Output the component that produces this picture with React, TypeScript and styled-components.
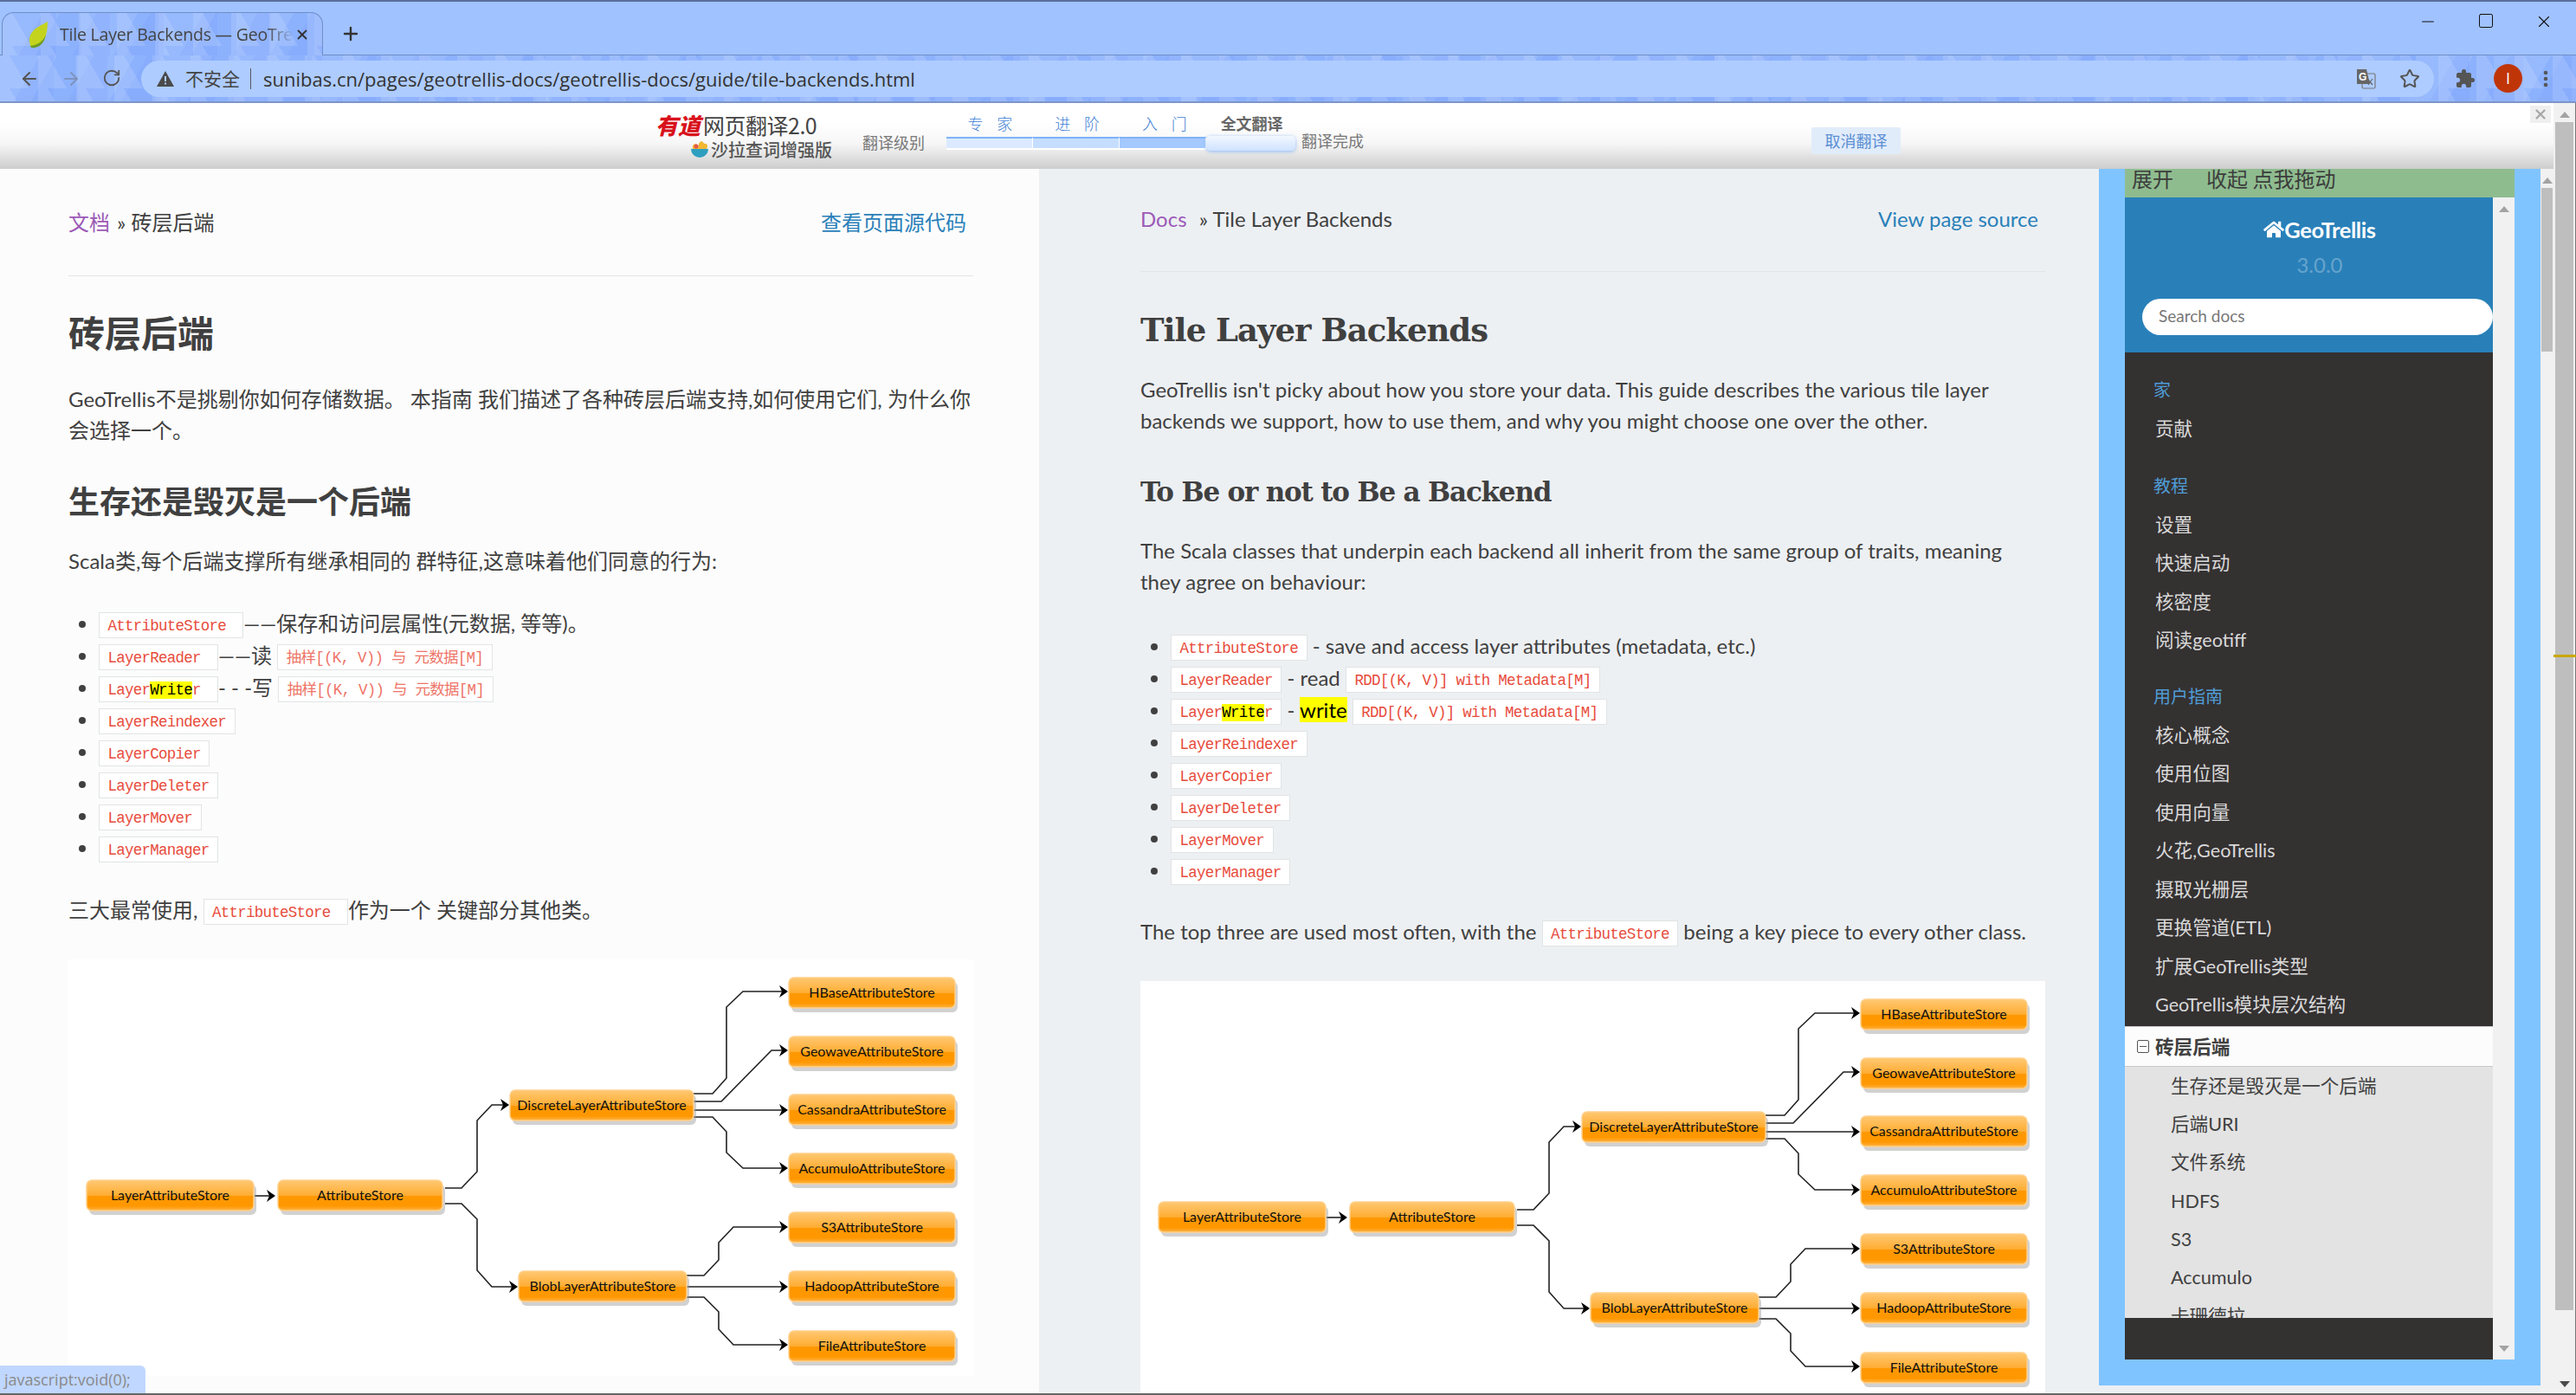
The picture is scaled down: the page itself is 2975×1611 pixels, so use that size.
import React from "react";
import styled, { createGlobalStyle } from "styled-components";
import { ArrowLeft, ArrowRight, RotateCw, Star, Plus, X, Minus, Square, MoreVertical } from "lucide-react";
import { MdExtension } from "react-icons/md";
import { FaHome } from "react-icons/fa";

const sans = `Lato, "Noto Sans CJK SC", sans-serif`;
const ui = `"Open Sans", "Noto Sans CJK SC", sans-serif`;

const GlobalStyle = createGlobalStyle`
  html, body { margin: 0; padding: 0; background: #fff; }
  * { box-sizing: border-box; }
  body { font-family: ${sans}; color: #404040; }
`;

const Window = styled.div`
  position: relative;
  width: 2975px;
  height: 1611px;
  display: flex;
  flex-direction: column;
  overflow: hidden;
  border-bottom: 2px solid #666;
`;

/* ---------- browser chrome ---------- */

const triangles = `
  background-color: #8db2fd;
  background-image:
    linear-gradient(60deg, rgba(255,255,255,.13) 50%, transparent 50%),
    linear-gradient(-60deg, rgba(110,140,255,.14) 50%, transparent 50%),
    linear-gradient(120deg, rgba(255,255,255,.09) 50%, transparent 50%);
  background-size: 44px 38px, 62px 54px, 90px 74px;
`;

const TabStrip = styled.div`
  height: 64px;
  flex: none;
  display: flex;
  align-items: flex-end;
  background: #a0c2ff;
  border-top: 2px solid #5a6f9c;
  border-bottom: 1px solid #6f8fc8;
  padding-left: 2px;
`;

const Tab = styled.div`
  width: 371px;
  height: 50px;
  margin-bottom: -1px;
  display: flex;
  align-items: center;
  padding: 0 14px 0 30px;
  border: 1px solid #6f8fc8;
  border-bottom: none;
  border-radius: 14px 14px 0 0;
  ${triangles}
`;

const TabTitle = styled.span`
  flex: 1;
  margin-left: 12px;
  font: 19.5px ${ui};
  letter-spacing: -0.2px;
  color: #444;
  white-space: nowrap;
  overflow: hidden;
  mask-image: linear-gradient(90deg, #000 88%, transparent);
`;

const NewTab = styled.div`
  margin: 0 0 12px 20px;
  color: #333;
  display: flex;
`;

const WindowControls = styled.div`
  margin-left: auto;
  align-self: flex-start;
  display: flex;
  gap: 46px;
  padding: 12px 26px 0 0;
  color: #111;
`;

const Toolbar = styled.div`
  height: 55px;
  flex: none;
  display: flex;
  align-items: center;
  border-bottom: 2px solid #7c96c8;
  ${triangles}
`;

const NavButtons = styled.div`
  width: 163px;
  flex: none;
  display: flex;
  gap: 24px;
  padding-left: 22px;
  color: #555;
`;

const Omnibox = styled.div`
  width: 2648px;
  height: 42px;
  flex: none;
  display: flex;
  align-items: center;
  border-radius: 21px;
  background: #aeccff;
  padding: 0 16px 0 18px;
`;

const Insecure = styled.span`
  margin-left: 13px;
  padding-right: 12px;
  border-right: 1px solid #556;
  font: 21px/24px ${ui};
  color: #444;
`;

const Url = styled.span`
  margin-left: 14px;
  font: 22px ${ui};
  color: #333;
`;

const OmniIcons = styled.div`
  margin-left: auto;
  display: flex;
  align-items: center;
  gap: 27px;
  color: #555;
`;

const ProfileArea = styled.div`
  flex: 1;
  display: flex;
  align-items: center;
  padding-left: 24px;
  color: #555;
`;

const Avatar = styled.div`
  width: 33px;
  height: 33px;
  margin-left: 21px;
  border-radius: 50%;
  background: #c03508;
  color: #fff;
  font: 18px/33px ${ui};
  text-align: center;
`;

const ToolbarDots = styled.div`
  margin-left: 15px;
  display: flex;
`;

/* ---------- translate bar ---------- */

const Body = styled.div`
  flex: 1;
  min-height: 0;
  display: flex;
`;

const Viewport = styled.div`
  flex: 1;
  min-width: 0;
  display: flex;
  flex-direction: column;
`;

const PageScrollbar = styled.div`
  width: 26px;
  flex: none;
  background: #f1f1f1;
  border-right: 1px solid #777;
  display: flex;
  flex-direction: column;
  align-items: center;
  padding: 10px 2px 7px 2px;
`;

const Arrow = styled.div<{ $down?: boolean; $color?: string; $push?: boolean }>`
  width: 0;
  height: 0;
  flex: none;
  margin-top: ${(p) => (p.$push ? "auto" : 0)};
  border-left: 6px solid transparent;
  border-right: 6px solid transparent;
  border-${(p) => (p.$down ? "top" : "bottom")}: 7px solid ${(p) => p.$color || "#a3a3a3"};
`;

const Thumb = styled.div<{ $height: number; $top: number; $width?: number }>`
  width: ${(p) => p.$width || 21}px;
  height: ${(p) => p.$height}px;
  margin-top: ${(p) => p.$top}px;
  flex: none;
  background: #bebebe;
`;

const ScrollMark = styled.div`
  position: absolute;
  right: 0;
  top: 756px;
  width: 26px;
  height: 3px;
  background: #c9a800;
`;

const TranslateBar = styled.div`
  height: 76px;
  flex: none;
  position: relative;
  z-index: 2;
  display: flex;
  padding-left: 757px;
  background: linear-gradient(#fff 0%, #fff 30%, #f6f6f6 62%, #cdcdcd 100%);
  font-family: "Noto Sans CJK SC", sans-serif;
`;

const Brand = styled.div`
  width: 239px;
  flex: none;
  padding-top: 9px;
`;

const BrandTop = styled.div`
  display: flex;
  align-items: center;
  height: 32px;
`;

const BrandMark = styled.span`
  font: italic 900 26px/32px "Noto Sans CJK SC", sans-serif;
  color: #d8121c;
  width: 55px;
`;

const BrandName = styled.span`
  font-size: 25px;
  color: #444;
  letter-spacing: -0.5px;
`;

const BrandSub = styled.div`
  display: flex;
  align-items: center;
  gap: 2px;
  margin-left: 40px;
  margin-top: 1px;
  font-size: 20px;
  line-height: 22px;
  font-weight: 500;
  color: #555;
`;

const BarNote = styled.span<{ $top: number }>`
  margin-top: ${(p) => p.$top}px;
  flex: none;
  font-size: 18px;
  line-height: 22px;
  color: #777;
`;

const Levels = styled.div`
  width: 403px;
  flex: none;
  margin: 0 7px 0 25px;
`;

const LevelLabels = styled.div`
  display: grid;
  grid-template-columns: repeat(4, 1fr);
  padding-top: 13px;
  height: 39px;
`;

const LevelLabel = styled.span<{ $active?: boolean }>`
  text-align: center;
  font-size: 18px;
  line-height: 20px;
  letter-spacing: ${(p) => (p.$active ? 0 : "16px")};
  margin-right: ${(p) => (p.$active ? 0 : "-16px")};
  font-weight: ${(p) => (p.$active ? 700 : 300)};
  color: ${(p) => (p.$active ? "#666" : "#3f7fd6")};
`;

const Track = styled.div`
  display: flex;
  height: 15px;
  align-items: stretch;
`;

const Segment = styled.div<{ $fill: string }>`
  width: 100px;
  border-right: 1px solid #fff;
  border-bottom: 2px solid #fff;
  border-top: 2px solid #7fb2f8;
  background: ${(p) => p.$fill};
`;

const Knob = styled.div`
  width: 103px;
  margin-top: -1px;
  height: 17px;
  border-radius: 5px;
  background: linear-gradient(#f3f8ff, #cfe2ff);
  box-shadow: 0 1px 4px #8db9f7;
`;

const CancelButton = styled.div`
  margin: 28px 0 0 517px;
  width: 103px;
  height: 31px;
  border-radius: 3px;
  background: #e1ecfa;
  color: #5b8fd3;
  font-size: 18px;
  line-height: 31px;
  text-align: center;
`;

const BarClose = styled.div`
  position: absolute;
  top: 3px;
  right: 3px;
  width: 24px;
  height: 20px;
  background: #efefef;
  color: #a8a8a8;
  display: flex;
  align-items: center;
  justify-content: center;
`;

/* ---------- documents ---------- */

const Main = styled.div`
  position: relative;
  flex: 1;
  min-height: 0;
  display: flex;
`;

const Pane = styled.div<{ $width?: number; $left: number; $bg: string; $top: number }>`
  ${(p) => (p.$width ? `width: ${p.$width}px; flex: none;` : "flex: 1;")}
  min-width: 0;
  overflow: hidden;
  padding: ${(p) => p.$top}px 0 0 ${(p) => p.$left}px;
  background: ${(p) => p.$bg};
`;

const InnerScrollbar = styled.div`
  width: 15px;
  flex: none;
  background: #f1f1f1;
  display: flex;
  flex-direction: column;
  align-items: center;
  padding-top: 10px;
`;

const Column = styled.div`
  width: 1045px;
`;

const Crumbs = styled.div`
  display: flex;
  justify-content: space-between;
  height: 36px;
  padding-right: 8px;
  font-size: 24px;
  line-height: 36px;
`;

const DocsLink = styled.a`
  color: #9b59b6;
  margin-right: 8px;
`;

const SourceLink = styled.a`
  color: #2980b9;
`;

const Divider = styled.div<{ $top: number }>`
  height: 1px;
  margin-top: ${(p) => p.$top}px;
  background: #e1e4e5;
`;

const Title = styled.h1<{ $top: number; $cjk?: boolean }>`
  margin: ${(p) => p.$top}px 0 0;
  height: 60px;
  font: 700 ${(p) => (p.$cjk ? "42px/60px" : "37px/60px")}
    ${(p) => (p.$cjk ? `"Noto Sans CJK SC"` : `"DejaVu Serif"`)}, sans-serif;
  letter-spacing: ${(p) => (p.$cjk ? 0 : "-1px")};
  color: #404040;
`;

const Subtitle = styled.h2<{ $top: number; $cjk?: boolean }>`
  margin: ${(p) => p.$top}px 0 0;
  height: 50px;
  font: 700 ${(p) => (p.$cjk ? "36px/50px" : "31px/50px")}
    ${(p) => (p.$cjk ? `"Noto Sans CJK SC"` : `"DejaVu Serif"`)}, sans-serif;
  letter-spacing: ${(p) => (p.$cjk ? 0 : "-1.2px")};
  color: #404040;
`;

const Para = styled.p<{ $top: number }>`
  margin: ${(p) => p.$top}px 0 0;
  font-size: 24px;
  line-height: 36px;
  white-space: pre-wrap;
`;

const Bullets = styled.ul<{ $top: number }>`
  margin: ${(p) => p.$top}px 0 0;
  padding: 0 0 0 35px;
  list-style: disc;
`;

const Bullet = styled.li`
  height: 37px;
  font-size: 24px;
  line-height: 37px;
  white-space: pre-wrap;
`;

const Code = styled.code<{ $faint?: boolean }>`
  display: inline-block;
  height: 30px;
  padding: 0 9.5px;
  border: 1px solid #e1e4e5;
  background: #fff;
  color: ${(p) => (p.$faint ? "#ee7468" : "#e74c3c")};
  font: 17.5px/30px "Liberation Mono", "Noto Sans CJK SC", monospace;
  letter-spacing: -0.75px;
  white-space: pre;
  vertical-align: 1px;
`;

const Mark = styled.mark`
  background: #ff0;
  color: #000;
`;

const DiagramFrame = styled.div<{ $top: number }>`
  margin-top: ${(p) => p.$top}px;
  width: 1045px;
  height: 481px;
  background: #fff;
`;

const nodes = [
  { label: "LayerAttributeStore", x: 21, y: 255, w: 193 },
  { label: "AttributeStore", x: 242, y: 255, w: 190 },
  { label: "DiscreteLayerAttributeStore", x: 510, y: 151, w: 212 },
  { label: "BlobLayerAttributeStore", x: 520, y: 360, w: 194 },
  { label: "HBaseAttributeStore", x: 832, y: 21, w: 192 },
  { label: "GeowaveAttributeStore", x: 832, y: 89, w: 192 },
  { label: "CassandraAttributeStore", x: 832, y: 156, w: 192 },
  { label: "AccumuloAttributeStore", x: 832, y: 224, w: 192 },
  { label: "S3AttributeStore", x: 832, y: 292, w: 192 },
  { label: "HadoopAttributeStore", x: 832, y: 360, w: 192 },
  { label: "FileAttributeStore", x: 832, y: 429, w: 192 },
];

const edges = [
  "M215 273 H238",
  "M435 264 H454 L472 245 V186 L489 168 H508",
  "M435 282 H454 L472 300 V359 L489 378 H518",
  "M722 155 H744 L760 137 V55 L779 37 H830",
  "M722 164 H754 L812 105 H830",
  "M722 174 H830",
  "M722 182 H744 L760 199 V223 L779 241 H830",
  "M714 365 H734 L751 347 V327 L768 309 H830",
  "M714 378 H830",
  "M714 390 H734 L751 407 V427 L768 445 H830",
];

const Diagram = ({ id }: { id: string }) => (
  <svg width="1045" height="481" viewBox="0 0 1045 481">
    <defs>
      <linearGradient id={id} x1="0" y1="0" x2="0" y2="1">
        <stop offset="0" stopColor="#ffc873" />
        <stop offset="0.5" stopColor="#ffad33" />
        <stop offset="0.52" stopColor="#ff9800" />
        <stop offset="0.85" stopColor="#ff9800" />
        <stop offset="1" stopColor="#ffb347" />
      </linearGradient>
      <marker id={`${id}-a`} markerUnits="userSpaceOnUse" markerWidth="12" markerHeight="14" refX="10" refY="7" orient="auto">
        <path d="M1 0 L11 7 L1 14 L4 7 Z" fill="#000" />
      </marker>
    </defs>
    {edges.map((d) => (
      <path key={d} d={d} fill="none" stroke="#222" strokeWidth="1.6" markerEnd={`url(#${id}-a)`} />
    ))}
    {nodes.map((n) => (
      <g key={n.label}>
        <rect x={n.x + 3} y={n.y + 5} width={n.w} height={35} rx="6" fill="#999" opacity="0.45" />
        <rect x={n.x} y={n.y} width={n.w} height={35} rx="6" fill={`url(#${id})`} stroke="#ffd08a" strokeWidth="1.5" />
        <text
          x={n.x + n.w / 2}
          y={n.y + 23}
          textAnchor="middle"
          fontFamily="Lato, sans-serif"
          fontSize="16"
          fill="#111"
        >
          {n.label}
        </text>
      </g>
    ))}
  </svg>
);

/* ---------- floating sidebar ---------- */

const SideFrame = styled.div`
  position: absolute;
  top: 0;
  right: 15px;
  width: 510px;
  height: 1405px;
  padding: 0 30px;
  background: #80c4ff;
`;

const DragBar = styled.div`
  height: 33px;
  padding-left: 8px;
  display: flex;
  gap: 38px;
  background: #8fbc8f;
  font: 24px/22px "Noto Sans CJK SC", sans-serif;
  color: #3c3c3c;
  overflow: hidden;
`;

const SideBody = styled.div`
  display: flex;
  height: 1342px;
`;

const SideNav = styled.div`
  width: 425px;
  flex: none;
  display: flex;
  flex-direction: column;
  background: #343131;
  overflow: hidden;
`;

const SideScroll = styled.div`
  flex: 1;
  background: #f1f1f1;
  display: flex;
  flex-direction: column;
  justify-content: space-between;
  align-items: center;
  padding: 10px 0 9px;
`;

const SideHead = styled.div`
  height: 179px;
  flex: none;
  background: #2980b9;
  padding-top: 20px;
  overflow: hidden;
`;

const SideHeadInner = styled.div`
  width: 450px;
  text-align: center;
`;

const SideLogo = styled.div`
  display: flex;
  justify-content: center;
  align-items: center;
  height: 34px;
  color: #fcfcfc;
  font: 700 25.5px/34px Lato, sans-serif;
  letter-spacing: -0.4px;
`;

const SideVersion = styled.div`
  margin-top: 10px;
  color: rgba(255, 255, 255, 0.3);
  font-size: 24px;
  line-height: 28px;
`;

const SearchBox = styled.div`
  margin: 25px 0 0 20px;
  width: 405px;
  height: 42px;
  border-radius: 21px;
  background: #fff;
  text-align: left;
  padding-left: 19px;
  color: #777;
  font-size: 19px;
  line-height: 40px;
`;

const SideList = styled.div`
  height: 1115px;
  overflow: hidden;
`;

const Caption = styled.div<{ $top: number }>`
  margin-top: ${(p) => p.$top}px;
  height: 46px;
  padding-left: 33px;
  color: #4f9cd6;
  font-size: 20px;
  line-height: 46px;
`;

const NavItem = styled.div`
  height: 44.5px;
  padding-left: 35px;
  color: #d9d9d9;
  font-size: 21.6px;
  line-height: 44.5px;
  white-space: nowrap;
`;

const CurrentItem = styled.div`
  height: 47px;
  margin-top: 2px;
  display: flex;
  align-items: center;
  gap: 7px;
  padding-left: 14px;
  background: #fcfcfc;
  border-top: 1px solid #c9c9c9;
  border-bottom: 1px solid #c9c9c9;
  color: #404040;
  font: 700 21.6px/44px "Noto Sans CJK SC", sans-serif;
`;

const ExpandBox = styled.span`
  width: 14px;
  height: 15px;
  border: 1px solid #555;
  border-radius: 2px;
  display: flex;
  align-items: center;
  justify-content: center;
  &::before {
    content: "";
    width: 8px;
    height: 1px;
    background: #555;
  }
`;

const SubList = styled.div`
  background: #e3e3e3;
`;

const SubItem = styled.div`
  height: 44.4px;
  padding-left: 53px;
  color: #404040;
  font-size: 21.6px;
  line-height: 44.4px;
`;

const StatusBubble = styled.div`
  position: absolute;
  left: 0;
  bottom: 0;
  width: 168px;
  height: 32px;
  border-radius: 0 6px 0 0;
  background: #c0d7ff;
  padding-left: 5px;
  color: #8a8a8a;
  font: 18px/32px ${ui};
  white-space: nowrap;
`;

const TranslateIcon = () => (
  <svg width="24" height="24" viewBox="0 0 24 24">
    <rect x="8" y="6" width="15" height="17" rx="1.5" fill="none" stroke="#777" strokeWidth="1.2" />
    <path d="M2 1 H13 L17 18 H2 Z" fill="#666" />
    <text x="4" y="14" fontSize="12" fontWeight="700" fontFamily="Liberation Sans" fill="#fff">G</text>
    <path d="M14 12 L20 19 M20 12 L15 19" stroke="#666" strokeWidth="1.2" />
  </svg>
);

const LeafIcon = () => (
  <svg width="24" height="32" viewBox="0 0 24 32">
    <path d="M22 1 C14 6 2 9 1 22 C1 26 2 30 4 31 C14 31 22 22 22 1 Z" fill="#c4d41e" />
    <path d="M2 29 C10 28 17 24 20 16 C18 28 10 32 3 31 Z" fill="#6e9c22" />
  </svg>
);

const WarnIcon = () => (
  <svg width="20" height="18" viewBox="0 0 20 18">
    <path d="M10 0 L20 18 H0 Z" fill="#4a4a4a" />
    <rect x="9" y="6" width="2" height="6" fill="#aeccff" />
    <rect x="9" y="13.5" width="2" height="2" fill="#aeccff" />
  </svg>
);

const SaladIcon = () => (
  <svg width="22" height="24" viewBox="0 0 22 24">
    <path d="M1 11 A10 10 0 0 0 21 11 Z" fill="#2f9fc0" />
    <path d="M3 11 C2 4 8 4 10 8 C9 2 15 0 16 5 C20 4 21 8 19 11 Z" fill="#f2b632" />
    <circle cx="7" cy="8" r="2.5" fill="#e4574c" />
  </svg>
);

const navTop = ["贡献"];
const navTutorials = ["设置", "快速启动", "核密度", "阅读geotiff"];
const navGuide = [
  "核心概念",
  "使用位图",
  "使用向量",
  "火花,GeoTrellis",
  "摄取光栅层",
  "更换管道(ETL)",
  "扩展GeoTrellis类型",
  "GeoTrellis模块层次结构",
];
const navSub = ["生存还是毁灭是一个后端", "后端URI", "文件系统", "HDFS", "S3", "Accumulo", "卡珊德拉"];

const plainCodes = ["LayerReindexer", "LayerCopier", "LayerDeleter", "LayerMover", "LayerManager"];

const ChineseDoc = () => (
  <Pane $width={1200} $left={79} $bg="#fcfcfc" $top={44}>
    <Column>
      <Crumbs>
        <span>
          <DocsLink>文档</DocsLink>» 砖层后端
        </span>
        <SourceLink>查看页面源代码</SourceLink>
      </Crumbs>
      <Divider $top={43} />
      <Title $top={34} $cjk>砖层后端</Title>
      <Para $top={30}>
        GeoTrellis不是挑剔你如何存储数据。 本指南 我们描述了各种砖层后端支持,如何使用它们, 为什么你会选择一个。
      </Para>
      <Subtitle $top={37} $cjk>生存还是毁灭是一个后端</Subtitle>
      <Para $top={28}>Scala类,每个后端支撑所有继承相同的 群特征,这意味着他们同意的行为:</Para>
      <Bullets $top={34.5}>
        <Bullet>
          <Code>{"AttributeStore "}</Code>——保存和访问层属性(元数据, 等等)。
        </Bullet>
        <Bullet>
          <Code>{"LayerReader "}</Code>——读 <Code $faint>抽样[(K, V)) 与 元数据[M]</Code>
        </Bullet>
        <Bullet>
          <Code>
            Layer<Mark>Write</Mark>{"r "}
          </Code>
          - - -写 <Code $faint>抽样[(K, V)) 与 元数据[M]</Code>
        </Bullet>
        {plainCodes.map((c) => (
          <Bullet key={c}>
            <Code>{c}</Code>
          </Bullet>
        ))}
      </Bullets>
      <Para $top={36.5}>
        三大最常使用, <Code>{"AttributeStore "}</Code>作为一个 关键部分其他类。
      </Para>
      <DiagramFrame $top={39}>
        <Diagram id="zh" />
      </DiagramFrame>
    </Column>
  </Pane>
);

const EnglishDoc = () => (
  <Pane $left={117} $bg="#edf0f3" $top={40}>
    <Column>
      <Crumbs>
        <span>
          <DocsLink>Docs</DocsLink> » Tile Layer Backends
        </span>
        <SourceLink>View page source</SourceLink>
      </Crumbs>
      <Divider $top={42} />
      <Title $top={37}>Tile Layer Backends</Title>
      <Para $top={21}>
        GeoTrellis isn't picky about how you store your data. This guide describes the various tile layer backends we
        support, how to use them, and why you might choose one over the other.
      </Para>
      <Subtitle $top={39}>To Be or not to Be a Backend</Subtitle>
      <Para $top={25}>
        The Scala classes that underpin each backend all inherit from the same group of traits, meaning they agree on
        behaviour:
      </Para>
      <Bullets $top={36.5}>
        <Bullet>
          <Code>AttributeStore</Code> - save and access layer attributes (metadata, etc.)
        </Bullet>
        <Bullet>
          <Code>LayerReader</Code> - read <Code>RDD[(K, V)] with Metadata[M]</Code>
        </Bullet>
        <Bullet>
          <Code>
            Layer<Mark>Write</Mark>r
          </Code>{" "}
          - <Mark>write</Mark> <Code>RDD[(K, V)] with Metadata[M]</Code>
        </Bullet>
        {plainCodes.map((c) => (
          <Bullet key={c}>
            <Code>{c}</Code>
          </Bullet>
        ))}
      </Bullets>
      <Para $top={35.5}>
        The top three are used most often, with the <Code>AttributeStore</Code> being a key piece to every other class.
      </Para>
      <DiagramFrame $top={39}>
        <Diagram id="en" />
      </DiagramFrame>
    </Column>
  </Pane>
);

const Sidebar = () => (
  <SideFrame>
    <DragBar>
      <span>展开</span>
      <span>收起 点我拖动</span>
    </DragBar>
    <SideBody>
      <SideNav>
        <SideHead>
          <SideHeadInner>
            <SideLogo>
              <FaHome size={24} />
              GeoTrellis
            </SideLogo>
            <SideVersion>3.0.0</SideVersion>
            <SearchBox>Search docs</SearchBox>
          </SideHeadInner>
        </SideHead>
        <SideList>
          <Caption $top={20}>家</Caption>
          {navTop.map((n) => (
            <NavItem key={n}>{n}</NavItem>
          ))}
          <Caption $top={20}>教程</Caption>
          {navTutorials.map((n) => (
            <NavItem key={n}>{n}</NavItem>
          ))}
          <Caption $top={19}>用户指南</Caption>
          {navGuide.map((n) => (
            <NavItem key={n}>{n}</NavItem>
          ))}
          <CurrentItem>
            <ExpandBox />
            砖层后端
          </CurrentItem>
          <SubList>
            {navSub.map((n) => (
              <SubItem key={n}>{n}</SubItem>
            ))}
          </SubList>
        </SideList>
      </SideNav>
      <SideScroll>
        <Arrow />
        <Arrow $down />
      </SideScroll>
    </SideBody>
  </SideFrame>
);

const App = () => (
  <Window>
    <GlobalStyle />
    <TabStrip>
      <Tab>
        <LeafIcon />
        <TabTitle>Tile Layer Backends — GeoTrellis</TabTitle>
        <X size={18} strokeWidth={2.4} color="#333" />
      </Tab>
      <NewTab>
        <Plus size={24} strokeWidth={2.4} />
      </NewTab>
      <WindowControls>
        <Minus size={22} strokeWidth={1.2} />
        <Square size={20} strokeWidth={1.2} />
        <X size={22} strokeWidth={1.2} />
      </WindowControls>
    </TabStrip>
    <Toolbar>
      <NavButtons>
        <ArrowLeft size={24} />
        <ArrowRight size={24} color="#7e93bd" />
        <RotateCw size={22} />
      </NavButtons>
      <Omnibox>
        <WarnIcon />
        <Insecure>不安全</Insecure>
        <Url>sunibas.cn/pages/geotrellis-docs/geotrellis-docs/guide/tile-backends.html</Url>
        <OmniIcons>
          <TranslateIcon />
          <Star size={24} strokeWidth={2} />
        </OmniIcons>
      </Omnibox>
      <ProfileArea>
        <MdExtension size={24} />
        <Avatar>I</Avatar>
        <ToolbarDots>
          <MoreVertical size={24} strokeWidth={2.6} />
        </ToolbarDots>
      </ProfileArea>
    </Toolbar>
    <Body>
      <Viewport>
        <TranslateBar>
          <Brand>
            <BrandTop>
              <BrandMark>有道</BrandMark>
              <BrandName>网页翻译2.0</BrandName>
            </BrandTop>
            <BrandSub>
              <SaladIcon />
              沙拉查词增强版
            </BrandSub>
          </Brand>
          <BarNote $top={34}>翻译级别</BarNote>
          <Levels>
            <LevelLabels>
              <LevelLabel>专家</LevelLabel>
              <LevelLabel>进阶</LevelLabel>
              <LevelLabel>入门</LevelLabel>
              <LevelLabel $active>全文翻译</LevelLabel>
            </LevelLabels>
            <Track>
              <Segment $fill="#dbeaff" />
              <Segment $fill="#c5deff" />
              <Segment $fill="#a3c9ff" />
              <Knob />
            </Track>
          </Levels>
          <BarNote $top={32}>翻译完成</BarNote>
          <CancelButton>取消翻译</CancelButton>
          <BarClose>
            <X size={18} strokeWidth={3} />
          </BarClose>
        </TranslateBar>
        <Main>
          <ChineseDoc />
          <EnglishDoc />
          <InnerScrollbar>
            <Arrow />
            <Thumb $height={189} $top={5} $width={13} />
          </InnerScrollbar>
          <Sidebar />
        </Main>
      </Viewport>
      <PageScrollbar>
        <Arrow />
        <Thumb $height={1372} $top={5} />
        <Arrow $down $push $color="#4a4a4a" />
      </PageScrollbar>
    </Body>
    <ScrollMark />
    <StatusBubble>javascript:void(0);</StatusBubble>
  </Window>
);

export default App;
